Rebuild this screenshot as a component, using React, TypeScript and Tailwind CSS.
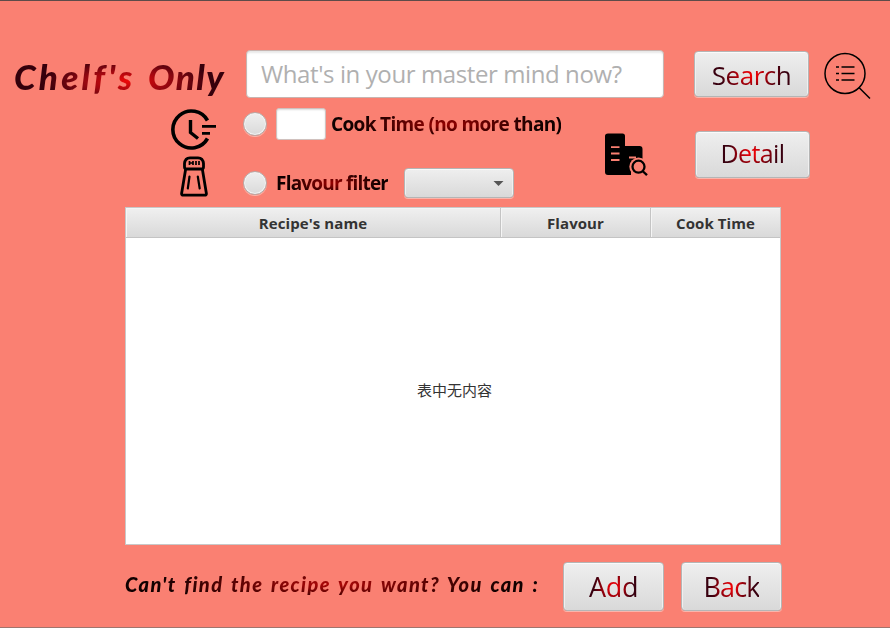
import React from "react";

const metal =
  "border border-[#b5b5b5] rounded-[4px] bg-linear-to-b from-[#efefef] to-[#d9d9d9] shadow-[inset_0_1px_0_#fafafa,inset_1px_0_0_#f0f0f0,inset_-1px_0_0_#f0f0f0,0_1px_0_#fbb5ab]";
const ui = "font-['Open_Sans','Noto_Sans',sans-serif]";
const script = "font-['Comic_Sans_MS','Lato',sans-serif] font-black italic";

function PushButton({ children, className, textClass }: { children: string; className: string; textClass: string }) {
  return (
    <button className={`${metal} ${className} flex shrink-0 items-center justify-center`}>
      <span
        className={`${ui} ${textClass} block bg-[radial-gradient(ellipse_at_center,#f20000_0%,#e00008_12%,#38000f_58%,#38000f_100%)] bg-clip-text whitespace-nowrap text-transparent`}
      >
        {children}
      </span>
    </button>
  );
}

function Radio() {
  return (
    <span className="block size-6 shrink-0 rounded-full border border-[#b7aaa7] bg-linear-to-b from-[#efefef] to-[#dadada] shadow-[inset_0_0_0_1px_#f3f3f3,0_1px_0_#fbb5ab]" />
  );
}

function ClockIcon() {
  return (
    <svg width="48" height="44" viewBox="0 0 48 44" fill="none" stroke="#000" strokeWidth="3.6">
      <path d="M37.500 12.500A18.500 18.500 0 1 0 37.500 30.500" />
      <path d="M20.500 12v12.500l7.500 6" strokeWidth="3.4" />
      <path d="M32 18.300h14M32 25.300h8" strokeWidth="2.8" />
    </svg>
  );
}

function ShakerIcon() {
  return (
    <svg width="28" height="41" viewBox="0 0 28 41" fill="none" stroke="#000" strokeWidth="2.8" strokeLinejoin="round" strokeLinecap="round">
      <path d="M4.500 11V7.500Q5 2 10 1.800H18Q23 2 23.500 7.500V11Q23.500 13 21.500 13H6.500Q4.500 13 4.500 11Z" />
      <path d="M5.500 14 1.600 37.500Q1.500 39.200 3.200 39.200H24.800Q26.500 39.200 26.400 37.500L22.500 14" />
      <path d="M9.500 20.500 7.800 32.500M17.800 20.500 19.700 32.500" strokeWidth="2.200" />
      <path d="M9.500 5v4M13 5v4M16 5v4M19 5v4M9.500 7h3" strokeWidth="1.700" strokeLinecap="butt" />
    </svg>
  );
}

function RecordsIcon() {
  return (
    <svg width="44" height="44" viewBox="0 0 44 44">
      <path d="M3 .5H17.500Q20 .5 20 3V13H34.500Q37.500 13 37.500 16V29H26V42H3Q0 42 0 39V3Q0 .5 3 .5Z" />
      <path d="M6 14.200h8.500M6 20.500h8.500M6 27h8.500M24 24.500h7" stroke="#fa8072" strokeWidth="1.800" />
      <circle cx="33.500" cy="33.700" r="9.200" fill="#fa8072" />
      <circle cx="33.500" cy="33.700" r="6" fill="none" stroke="#000" strokeWidth="2.300" />
      <path d="m37.500 38 4.500 4.200" stroke="#000" strokeWidth="2.300" />
    </svg>
  );
}

function ListSearchIcon() {
  return (
    <svg width="48" height="48" viewBox="0 0 48 48" fill="none" stroke="#000" strokeWidth="1.500">
      <circle cx="21" cy="21.500" r="20" />
      <path d="m35 35.500 11 11" />
      <path d="M12 15h3m2.500 0H30.500M12 21.500h3m2.500 0H30.500M12 28h3m2.500 0H30.500" strokeWidth="1.700" />
    </svg>
  );
}

const columns = [
  { name: "Recipe's name", width: "w-[375px]" },
  { name: "Flavour", width: "w-[150px]" },
  { name: "Cook Time", width: "w-[129px]" },
];

export default function App() {
  return (
    <main className="flex h-[628px] w-[890px] flex-col overflow-hidden border-y border-t-[#5d4b49] border-b-[#9f746d] bg-[#fa8072]">
      <header className="mt-[49px] flex h-[48px] shrink-0 items-start pl-[14px]">
        <h1 className="w-[232px] shrink-0">
          <span className={`${script} block w-[218px] bg-[radial-gradient(ellipse_at_52%_60%,#ee0808_0%,#9c0710_25%,#38000c_52%,#2c0009_100%)] bg-clip-text text-[35px] leading-[52px] whitespace-nowrap text-transparent`}>
            <span className="tracking-[3.2px]">Chelf's</span>
            <span className="tracking-[5px]"> </span>
            <span className="tracking-[1.5px]">Only</span>
          </span>
        </h1>
        <input
          placeholder="What's in your master mind now?"
          className={`${ui} h-[48px] w-[418px] shrink-0 rounded-[4px] border border-[#c8b4b0] bg-white px-[14px] pb-[2px] text-[24px] tracking-[-0.4px] shadow-[inset_0_2px_2px_#e8e8e8] outline-none placeholder:text-[#b0b0b0]`}
        />
        <PushButton className="mt-px ml-[30px] h-[46px] w-[115px]" textClass="relative top-px text-[26px] leading-[44px] tracking-[-0.5px]">
          Search
        </PushButton>
        <div className="mt-[2px] ml-[15px]">
          <ListSearchIcon />
        </div>
      </header>

      <section className="mt-[9px] flex h-[100px] shrink-0 items-start pl-[170px]">
        <div className="flex w-[73px] flex-col pt-px">
          <ClockIcon />
          <div className="mt-[4px] pl-[10px]">
            <ShakerIcon />
          </div>
        </div>
        <div className="flex w-[362px] flex-col">
          <div className="flex h-[34px] items-center">
            <Radio />
            <input className="ml-[9px] h-[32px] w-[50px] rounded-[3px] border border-[#d0c1be] bg-white shadow-[inset_0_1px_2px_#ddd] outline-none" />
            <span className={`${ui} ml-[5px] bg-[radial-gradient(ellipse_at_center,#940000_0%,#7a0000_15%,#100000_60%)] bg-clip-text text-[19px] leading-[30px] font-bold tracking-[-0.65px] whitespace-nowrap text-transparent`}>
              Cook Time (no more than)
            </span>
          </div>
          <div className="mt-[24px] flex h-[36px] items-center">
            <Radio />
            <span className={`${ui} ml-[9px] w-[128px] text-[19px] leading-[30px] font-bold tracking-[-0.8px] whitespace-nowrap`}>
              <span className="bg-[radial-gradient(ellipse_at_center,#940000_0%,#7a0000_15%,#100000_60%)] bg-clip-text text-transparent">Flavour filter</span>
            </span>
            <span className={`${metal} flex h-[30px] w-[110px] shrink-0 items-center justify-end pr-[9px]`}>
              <svg width="11" height="5" viewBox="0 0 11 5">
                <path d="M.5 0h10l-5 5z" fill="#555" />
              </svg>
            </span>
          </div>
        </div>
        <div className="w-[90px] pt-[26px]">
          <RecordsIcon />
        </div>
        <PushButton className="mt-[24px] h-[47px] w-[115px]" textClass="text-[25px] leading-[42px] tracking-[-0.6px] mb-[3px]">
          Detail
        </PushButton>
      </section>

      <section className="ml-[125px] flex h-[338px] w-[656px] shrink-0 flex-col border border-[#c8c8c8] bg-white">
        <div className="flex h-[30px] shrink-0 border-b border-[#c4c4c4] bg-linear-to-b from-[#f0f0f0] to-[#d9d9d9]">
          {columns.map((c) => (
            <div key={c.name} className={`${c.width} ${ui} flex items-center justify-center border-r border-[#c4c4c4] pt-[2px] text-[15px] font-bold tracking-[0.08px] text-[#333] shadow-[inset_1px_1px_0_#f5f5f5] last:border-r-0`}>
              {c.name}
            </div>
          ))}
        </div>
        <div className="flex grow items-center justify-center pb-[2px] pl-[3px] font-['Noto_Sans_CJK_SC',sans-serif] text-[15px] text-[#333]">表中无内容</div>
      </section>

      <footer className="mt-[17px] flex h-[50px] shrink-0 items-start pl-[125px]">
        <p className="w-[438px] shrink-0 pt-[2px]">
          <span className={`${script} inline-block bg-[radial-gradient(ellipse_at_center,#b00808_0%,#8a0505_16%,#100000_62%)] bg-clip-text text-[20px] leading-[40px] tracking-[1.4px] [word-spacing:2px] whitespace-pre text-transparent`}>
            {"Can't find the recipe you want? You can :"}
          </span>
        </p>
        <PushButton className="h-[49px] w-[101px]" textClass="text-[27px] leading-[46px] tracking-[-0.3px]">
          Add
        </PushButton>
        <PushButton className="ml-[17px] h-[49px] w-[101px]" textClass="text-[27px] leading-[46px] tracking-[-0.9px]">
          Back
        </PushButton>
      </footer>
    </main>
  );
}
